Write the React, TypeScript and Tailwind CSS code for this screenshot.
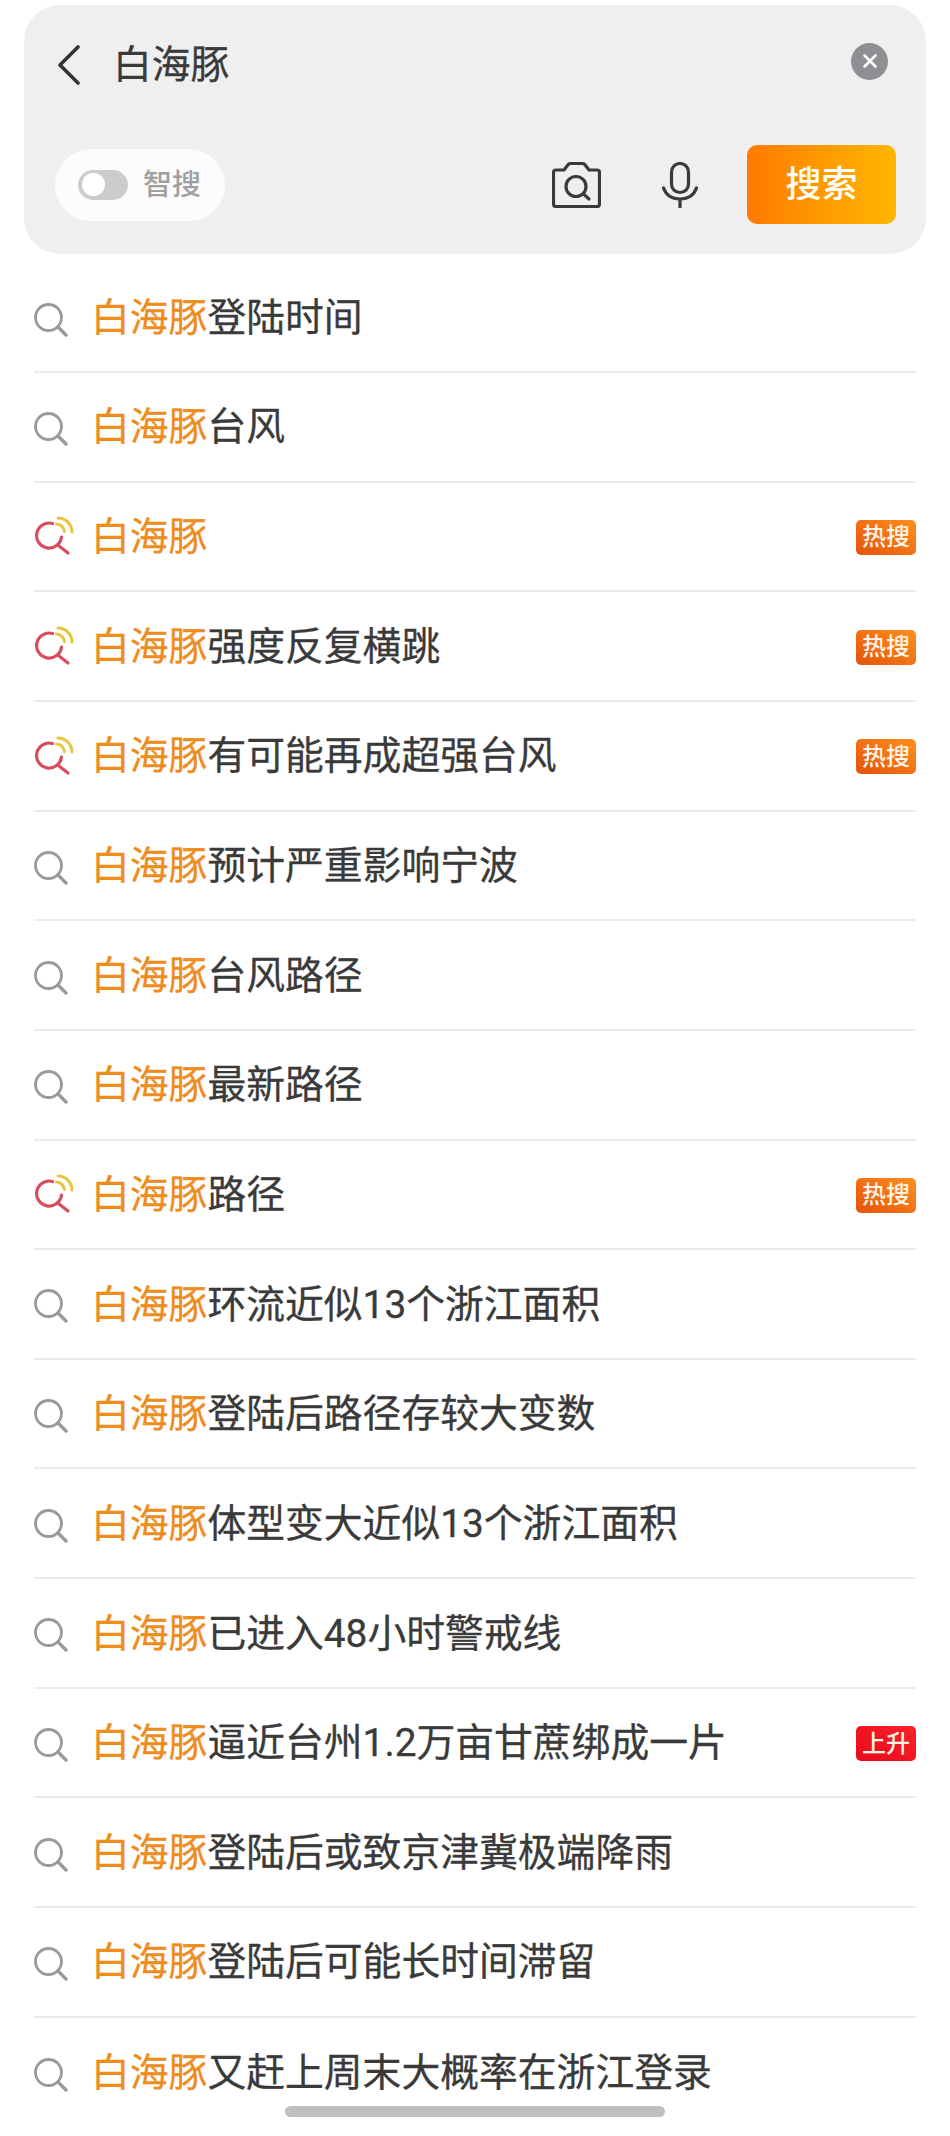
import { clsx } from "clsx";

type Suggestion = {
  text: string;
  hot?: boolean;
  badge?: "热搜" | "上升";
};

const keyword = "白海豚";

const suggestions: Suggestion[] = [
  { text: "登陆时间" },
  { text: "台风" },
  { text: "", hot: true, badge: "热搜" },
  { text: "强度反复横跳", hot: true, badge: "热搜" },
  { text: "有可能再成超强台风", hot: true, badge: "热搜" },
  { text: "预计严重影响宁波" },
  { text: "台风路径" },
  { text: "最新路径" },
  { text: "路径", hot: true, badge: "热搜" },
  { text: "环流近似13个浙江面积" },
  { text: "登陆后路径存较大变数" },
  { text: "体型变大近似13个浙江面积" },
  { text: "已进入48小时警戒线" },
  { text: "逼近台州1.2万亩甘蔗绑成一片", badge: "上升" },
  { text: "登陆后或致京津冀极端降雨" },
  { text: "登陆后可能长时间滞留" },
  { text: "又赶上周末大概率在浙江登录" },
];

const SearchIcon = () => (
  <svg width="34" height="34" viewBox="0 0 34 34" fill="none" className="mt-[3px] block">
    <circle cx="14.5" cy="14.5" r="13" stroke="#9a9a9e" strokeWidth="2.8" />
    <path d="M24 24 L32 32" stroke="#9a9a9e" strokeWidth="3.4" strokeLinecap="round" />
  </svg>
);

const HotIcon = () => (
  <svg width="40" height="40" viewBox="0 0 40 40" fill="none" className="mt-[-2px] block">
    <path d="M18.5 7.5 A12.5 12.5 0 1 0 27.5 21" stroke="#d94c5e" strokeWidth="3.2" strokeLinecap="round" />
    <path d="M25 30 L34 37" stroke="#d94c5e" strokeWidth="3.2" strokeLinecap="round" />
    <path d="M24 2 A14 14 0 0 1 38 16" stroke="#e9c43f" strokeWidth="3" strokeLinecap="round" />
    <path d="M22.5 8 A8.5 8.5 0 0 1 30.5 15.5" stroke="#e9c43f" strokeWidth="3" strokeLinecap="round" />
  </svg>
);

const Badge = ({ label }: { label: "热搜" | "上升" }) => (
  <span
    className={clsx(
      "ml-auto flex h-[35px] w-[60px] items-center justify-center rounded-[5px] text-[24px] font-medium leading-none text-[#fff4e8]",
      label === "热搜"
        ? "bg-gradient-to-tr from-[#e4520a] to-[#ff8f1f]"
        : "bg-gradient-to-tr from-[#e8081c] to-[#fb1f2a]"
    )}
  >
    {label}
  </span>
);

export default function App() {
  return (
    <div className="relative h-[2136px] w-[950px] overflow-hidden bg-white font-['Roboto','Noto_Sans_CJK_SC',sans-serif]">
      <div className="mx-[24px] mt-[5px] flex h-[249px] flex-col rounded-[36px] bg-[#efefef] pl-[31px] pr-[30px] pt-[30px]">
        <div className="flex h-[60px] items-center">
          <svg width="24" height="40" viewBox="0 0 24 40" fill="none" className="ml-[2px]">
            <path d="M21 2 L3 20 L21 38" stroke="#333333" strokeWidth="3.6" strokeLinecap="round" strokeLinejoin="round" />
          </svg>
          <span className="ml-[32px] text-[38.8px] leading-none text-[#3a3a3a] [-webkit-text-stroke:0.3px_currentColor]">{keyword}</span>
          <span className="mb-[8px] ml-auto mr-[8px] flex h-[37px] w-[37px] items-center justify-center rounded-full bg-[#8e8e93]">
            <svg width="16" height="16" viewBox="0 0 16 16" fill="none">
              <path d="M2.5 2.5 L13.5 13.5 M13.5 2.5 L2.5 13.5" stroke="#ffffff" strokeWidth="2.6" strokeLinecap="round" />
            </svg>
          </span>
        </div>
        <div className="mt-[50px] flex h-[79px] items-center">
          <div className="flex h-[72px] w-[170px] items-center rounded-full bg-[#fcfcfc] pl-[23px]">
            <span className="flex h-[30px] w-[50px] items-center rounded-full bg-[#cccccc] pl-[4px]">
              <span className="h-[23px] w-[23px] rounded-full bg-white" />
            </span>
            <span className="ml-[15px] pt-[2px] text-[29px] font-medium leading-none text-[#a0a0a0]">智搜</span>
          </div>
          <svg width="49" height="46" viewBox="0 0 49 46" fill="none" className="ml-auto">
            <path
              d="M4 8 H12 L16 2.7 Q17 1.5 19 1.5 H30 Q32 1.5 33 2.7 L37 8 H45 Q47.5 8 47.5 10.5 V42 Q47.5 44.5 45 44.5 H4 Q1.5 44.5 1.5 42 V10.5 Q1.5 8 4 8 Z"
              stroke="#3a3a3a"
              strokeWidth="3.2"
              strokeLinejoin="round"
            />
            <circle cx="24" cy="24.5" r="10" stroke="#3a3a3a" strokeWidth="3.2" />
            <path d="M31.5 32 L37 37" stroke="#3a3a3a" strokeWidth="3.2" strokeLinecap="round" />
          </svg>
          <svg width="36" height="46" viewBox="0 0 36 46" fill="none" className="ml-[61px]">
            <rect x="9.5" y="1.5" width="17" height="29" rx="8.5" stroke="#3a3a3a" strokeWidth="3.2" />
            <path d="M1.5 26 C4 33 10 37 18 37 C26 37 32 33 34.5 26 M18 37 V45" stroke="#3a3a3a" strokeWidth="3.2" strokeLinecap="round" />
          </svg>
          <button className="ml-[49px] h-[79px] w-[149px] rounded-[10px] bg-gradient-to-r from-[#ff7a00] to-[#ffb600] text-[36px] font-medium leading-none text-white">
            搜索
          </button>
        </div>
      </div>

      <ul className="mx-[34px] mt-[9.4px]">
        {suggestions.map((item, idx) => (
          <li
            key={idx}
            className={clsx(
              "flex h-[109.65px] items-center pt-[2px]",
              idx < suggestions.length - 1 && "border-b-2 border-[#ebebeb]"
            )}
          >
            <span className="w-[57px] shrink-0">{item.hot ? <HotIcon /> : <SearchIcon />}</span>
            <span className="text-[38.8px] leading-none text-[#3a3a3a] [-webkit-text-stroke:0.3px_currentColor]">
              <span className="text-[#ee8c1e]">{keyword}</span>
              {item.text}
            </span>
            {item.badge && <Badge label={item.badge} />}
          </li>
        ))}
      </ul>

      <div className="absolute bottom-[19px] left-[285px] h-[11px] w-[380px] rounded-full bg-[#bfbfbf]" />
    </div>
  );
}
